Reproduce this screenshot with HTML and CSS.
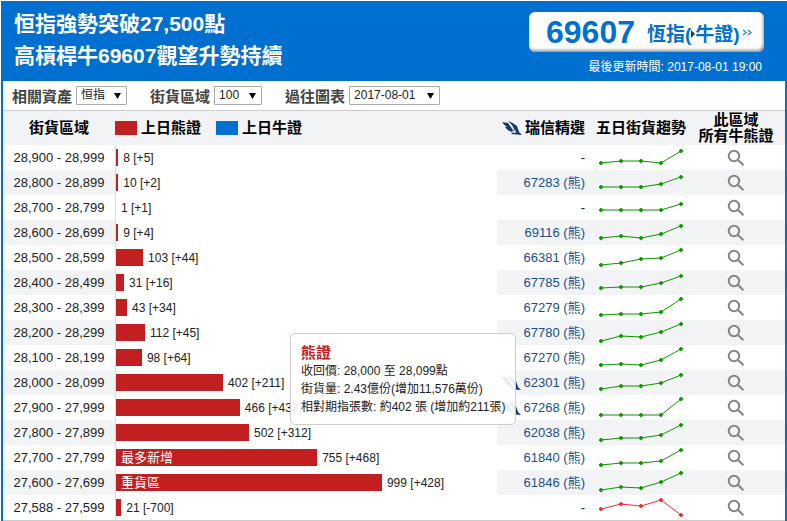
FILE: index.html
```
<!doctype html>
<html lang="zh-Hant">
<head>
<meta charset="utf-8">
<meta name="viewport" content="width=device-width,initial-scale=1">
<title>恒指牛熊證街貨分佈</title>
<link rel="stylesheet" href="styles.css">
</head>

<body>
<!-- 共用圖形 -->
<svg class="defs" width="0" height="0">
	<defs>
		<marker id="dotUp" viewBox="0 0 5 5" refX="2.5" refY="2.5" markerWidth="5" markerHeight="5" markerUnits="userSpaceOnUse"><path d="M2.5 0L5 2.5 2.5 5 0 2.5z" fill="#109600"/></marker>
		<marker id="dotDown" viewBox="0 0 5 5" refX="2.5" refY="2.5" markerWidth="5" markerHeight="5" markerUnits="userSpaceOnUse"><path d="M2.5 0L5 2.5 2.5 5 0 2.5z" fill="#ee2e33"/></marker>
	</defs>
	<symbol id="find" viewBox="0 0 18 18">
		<circle cx="7" cy="7" r="5.2" fill="none" stroke="#868686" stroke-width="2"/>
		<path d="M10.8 10.8L16.4 16.2" fill="none" stroke="#868686" stroke-width="2.2"/>
	</symbol>
	<symbol id="sail" viewBox="0 0 20 14">
		<path d="M0 1L6 2 11 9 10 11Q6 10 3 6L5 6Q2 4 0 1z" fill="#16386b"/>
		<path d="M6 0Q12 2 15 5L17 11 20 14 9 13Q12 11 12 8Q10 3 6 0z" fill="#16386b"/>
		<path d="M13 8L14 12 11 12z" fill="#dfe4ec"/>
	</symbol>
</svg>

<div id="cbbc">
	<div id="banner">
		<h1>恒指強勢突破27,500點<br>高槓桿牛69607觀望升勢持續</h1>
		<div class="pick">
			<a href="#" class="pick_btn">
				<strong>69607</strong>
				<span class="name">恆指(<svg class="tri" width="4" height="8" viewBox="0 0 4 8"><path d="M0 0L4 4 0 8z" fill="#123a6b"/></svg>牛證)</span>
				<svg width="11" height="7" viewBox="0 0 11 7"><path d="M1 1L4 3.5 1 6M6 1L9 3.5 6 6" fill="none" stroke="#3f8fdc" stroke-width="1.6"/></svg>
			</a>
			<p class="update">最後更新時間: 2017-08-01 19:00</p>
		</div>
	</div>

	<form id="filter">
		<label for="asset">相關資產</label>
		<select id="asset" class="s_asset"><option>恒指</option></select>
		<label for="range">街貨區域</label>
		<select id="range" class="s_range"><option>100</option></select>
		<label for="past">過往圖表</label>
		<select id="past" class="s_past"><option>2017-08-01</option></select>
	</form>

	<table id="street">
		<colgroup>
			<col class="c_range"><col><col class="c_pick"><col class="c_trend"><col class="c_find">
		</colgroup>
		<thead>
			<tr>
				<th>街貨區域</th>
				<th class="legend"><span class="key"><i class="bear"></i>上日熊證</span><span class="key"><i class="bull"></i>上日牛證</span></th>
				<th class="best"><span><svg width="20" height="14"><use href="#sail"/></svg>瑞信精選</span></th>
				<th>五日街貨趨勢</th>
				<th class="find">此區域<br>所有牛熊證</th>
			</tr>
		</thead>
		<tbody>
			<tr>
				<td>28,900 - 28,999</td>
				<td class="chart"><div class="line"><div class="bar" style="width:0.6%"></div><span>8 [+5]</span></div></td>
				<td class="best">-</td>
				<td class="trend"><svg class="up" width="90" height="25" viewBox="0 0 90 25"><polyline points="5,18 25,16 45,16 65,18 85,6"/></svg></td>
				<td class="find"><a href="#" aria-label="28,900 - 28,999"><svg width="18" height="18"><use href="#find"/></svg></a></td>
			</tr>
			<tr>
				<td>28,800 - 28,899</td>
				<td class="chart"><div class="line"><div class="bar" style="width:0.6%"></div><span>10 [+2]</span></div></td>
				<td class="best"><a href="#">67283 (熊)</a></td>
				<td class="trend"><svg class="up" width="90" height="25" viewBox="0 0 90 25"><polyline points="5,17 25,17 45,17 65,14 85,7"/></svg></td>
				<td class="find"><a href="#" aria-label="28,800 - 28,899"><svg width="18" height="18"><use href="#find"/></svg></a></td>
			</tr>
			<tr>
				<td>28,700 - 28,799</td>
				<td class="chart"><div class="line"><div class="bar" style="width:0%"></div><span>1 [+1]</span></div></td>
				<td class="best">-</td>
				<td class="trend"><svg class="up" width="90" height="25" viewBox="0 0 90 25"><polyline points="5,15 25,15 45,15 65,15 85,9"/></svg></td>
				<td class="find"><a href="#" aria-label="28,700 - 28,799"><svg width="18" height="18"><use href="#find"/></svg></a></td>
			</tr>
			<tr>
				<td>28,600 - 28,699</td>
				<td class="chart"><div class="line"><div class="bar" style="width:0.6%"></div><span>9 [+4]</span></div></td>
				<td class="best"><a href="#">69116 (熊)</a></td>
				<td class="trend"><svg class="up" width="90" height="25" viewBox="0 0 90 25"><polyline points="5,18 25,16 45,18 65,14 85,6"/></svg></td>
				<td class="find"><a href="#" aria-label="28,600 - 28,699"><svg width="18" height="18"><use href="#find"/></svg></a></td>
			</tr>
			<tr>
				<td>28,500 - 28,599</td>
				<td class="chart"><div class="line"><div class="bar" style="width:7.1%"></div><span>103 [+44]</span></div></td>
				<td class="best"><a href="#">66381 (熊)</a></td>
				<td class="trend"><svg class="up" width="90" height="25" viewBox="0 0 90 25"><polyline points="5,20 25,18 45,14 65,13 85,5"/></svg></td>
				<td class="find"><a href="#" aria-label="28,500 - 28,599"><svg width="18" height="18"><use href="#find"/></svg></a></td>
			</tr>
			<tr>
				<td>28,400 - 28,499</td>
				<td class="chart"><div class="line"><div class="bar" style="width:2.1%"></div><span>31 [+16]</span></div></td>
				<td class="best"><a href="#">67785 (熊)</a></td>
				<td class="trend"><svg class="up" width="90" height="25" viewBox="0 0 90 25"><polyline points="5,18 25,17 45,17 65,13 85,6"/></svg></td>
				<td class="find"><a href="#" aria-label="28,400 - 28,499"><svg width="18" height="18"><use href="#find"/></svg></a></td>
			</tr>
			<tr>
				<td>28,300 - 28,399</td>
				<td class="chart"><div class="line"><div class="bar" style="width:2.9%"></div><span>43 [+34]</span></div></td>
				<td class="best"><a href="#">67279 (熊)</a></td>
				<td class="trend"><svg class="up" width="90" height="25" viewBox="0 0 90 25"><polyline points="5,20 25,19 45,19 65,17 85,4"/></svg></td>
				<td class="find"><a href="#" aria-label="28,300 - 28,399"><svg width="18" height="18"><use href="#find"/></svg></a></td>
			</tr>
			<tr>
				<td>28,200 - 28,299</td>
				<td class="chart"><div class="line"><div class="bar" style="width:7.6%"></div><span>112 [+45]</span></div></td>
				<td class="best"><a href="#">67780 (熊)</a></td>
				<td class="trend"><svg class="up" width="90" height="25" viewBox="0 0 90 25"><polyline points="5,21 25,16 45,17 65,12 85,4"/></svg></td>
				<td class="find"><a href="#" aria-label="28,200 - 28,299"><svg width="18" height="18"><use href="#find"/></svg></a></td>
			</tr>
			<tr>
				<td>28,100 - 28,199</td>
				<td class="chart"><div class="line"><div class="bar" style="width:6.8%"></div><span>98 [+64]</span></div></td>
				<td class="best"><a href="#">67270 (熊)</a></td>
				<td class="trend"><svg class="up" width="90" height="25" viewBox="0 0 90 25"><polyline points="5,20 25,19 45,20 65,15 85,4"/></svg></td>
				<td class="find"><a href="#" aria-label="28,100 - 28,199"><svg width="18" height="18"><use href="#find"/></svg></a></td>
			</tr>
			<tr>
				<td>28,000 - 28,099</td>
				<td class="chart">
					<div class="line"><div class="bar" style="width:28.1%"></div><span>402 [+211]</span>
						<!-- 滑鼠移到橫條時的提示框 -->
						<div id="tip">
							<h2>熊證</h2>
							<p>收回價: 28,000 至 28,099點</p>
							<p>街貨量: 2.43億份(增加11,576萬份)</p>
							<p>相對期指張數: 約402 張 (增加約211張)</p>
						</div>
					</div>
				</td>
				<td class="best"><span><svg width="20" height="14"><use href="#sail"/></svg><a href="#">62301 (熊)</a></span></td>
				<td class="trend"><svg class="up" width="90" height="25" viewBox="0 0 90 25"><polyline points="5,19 25,16 45,16 65,13 85,5"/></svg></td>
				<td class="find"><a href="#" aria-label="28,000 - 28,099"><svg width="18" height="18"><use href="#find"/></svg></a></td>
			</tr>
			<tr>
				<td>27,900 - 27,999</td>
				<td class="chart"><div class="line"><div class="bar" style="width:32.5%"></div><span>466 [+433]</span></div></td>
				<td class="best"><span><svg width="20" height="14"><use href="#sail"/></svg><a href="#">67268 (熊)</a></span></td>
				<td class="trend"><svg class="up" width="90" height="25" viewBox="0 0 90 25"><polyline points="5,20 25,20 45,20 65,20 85,4"/></svg></td>
				<td class="find"><a href="#" aria-label="27,900 - 27,999"><svg width="18" height="18"><use href="#find"/></svg></a></td>
			</tr>
			<tr>
				<td>27,800 - 27,899</td>
				<td class="chart"><div class="line"><div class="bar" style="width:34.9%"></div><span>502 [+312]</span></div></td>
				<td class="best"><a href="#">62038 (熊)</a></td>
				<td class="trend"><svg class="up" width="90" height="25" viewBox="0 0 90 25"><polyline points="5,20 25,18 45,18 65,15 85,5"/></svg></td>
				<td class="find"><a href="#" aria-label="27,800 - 27,899"><svg width="18" height="18"><use href="#find"/></svg></a></td>
			</tr>
			<tr>
				<td>27,700 - 27,799</td>
				<td class="chart"><div class="line"><div class="bar" style="width:52.8%">最多新增</div><span>755 [+468]</span></div></td>
				<td class="best"><a href="#">61840 (熊)</a></td>
				<td class="trend"><svg class="up" width="90" height="25" viewBox="0 0 90 25"><polyline points="5,20 25,18 45,18 65,16 85,5"/></svg></td>
				<td class="find"><a href="#" aria-label="27,700 - 27,799"><svg width="18" height="18"><use href="#find"/></svg></a></td>
			</tr>
			<tr>
				<td>27,600 - 27,699</td>
				<td class="chart"><div class="line"><div class="bar" style="width:69.8%">重貨區</div><span>999 [+428]</span></div></td>
				<td class="best"><a href="#">61846 (熊)</a></td>
				<td class="trend"><svg class="up" width="90" height="25" viewBox="0 0 90 25"><polyline points="5,20 25,17 45,18 65,12 85,3"/></svg></td>
				<td class="find"><a href="#" aria-label="27,600 - 27,699"><svg width="18" height="18"><use href="#find"/></svg></a></td>
			</tr>
			<tr>
				<td>27,588 - 27,599</td>
				<td class="chart"><div class="line"><div class="bar" style="width:1.4%"></div><span>21 [-700]</span></div></td>
				<td class="best">-</td>
				<td class="trend"><svg class="down" width="90" height="25" viewBox="0 0 90 25"><polyline points="5,14 25,9 45,11 65,5 85,20"/></svg></td>
				<td class="find"><a href="#" aria-label="27,588 - 27,599"><svg width="18" height="18"><use href="#find"/></svg></a></td>
			</tr>
		</tbody>
	</table>
</div>
</body>
</html>
```
FILE: styles.css
```
body,div,h1,h2,p,form,table,th,td{margin:0; padding:0;}
body{
	font-family:"Liberation Sans", Arial, "Noto Sans CJK TC", sans-serif;
	font-size:13px;
	color:#222;
	background:#fff;
}
a{text-decoration:none;}
.defs{position:absolute;}
#cbbc{
	margin:1px 0 0 1px;
	border:solid #0070d0;
	border-width:0 2px;
}

/*頂部標題*/
#banner{
	display:flex;
	justify-content:space-between;
	height:80px;
	padding:0 21px 0 11px;
	background:#0070d0;
	color:#fff;
}
#banner h1{
	padding-top:7px;
	font-size:21px;
	line-height:32px;
	white-space:nowrap;
}
.pick{padding-top:11px; text-align:right;}
.pick_btn{
	display:flex;
	align-items:center;
	width:235px;
	height:40px;
	padding:0 8px 0 17px;
	box-sizing:border-box;
	border-radius:6px;
	background:#fff;
	box-shadow:inset -1px -2px 3px #999;
	color:#0070d0;
	white-space:nowrap;
}
.pick_btn strong{font-size:32px; line-height:40px;}
.pick_btn .name{margin:0 2px 0 12px; font-size:19px; font-weight:bold;}
.tri{vertical-align:3px;}
.update{padding:6px 2px 0 0; font-size:12px; line-height:18px;}

/*篩選*/
#filter{
	display:flex;
	align-items:center;
	height:29px;
	padding-left:9px;
	border-bottom:1px solid #ccc;
}
#filter label{
	margin-right:4px;
	font-size:15px;
	font-weight:bold;
	color:#444;
}
#filter select{
	height:19px;
	margin:0 23px 0 0;
	padding:0 0 0 4px;
	border:1px solid #aaa;
	border-radius:1px;
	appearance:none;
	background:#fff url("data:image/svg+xml,%3Csvg xmlns='http://www.w3.org/2000/svg' width='7' height='6'%3E%3Cpath d='M0 0h7L3.5 6z'/%3E%3C/svg%3E") no-repeat right 5px center;
	font-family:inherit;
	font-size:12px;
	line-height:17px;
	color:#222;
}
#filter .s_asset{width:51px;}
#filter .s_range{width:48px;}
#filter .s_past{width:91px;}

/*街貨表*/
#street{
	width:100%;
	table-layout:fixed;
	border-collapse:collapse;
	border-bottom:1px solid #ccc;
}
.c_range{width:112px;}
.c_pick{width:94px;}
.c_trend{width:100px;}
.c_find{width:94px;}
#street th{
	height:34px;
	background:#f2f3f5;
	font-size:15px;
	line-height:16px;
	color:#000;
	white-space:nowrap;
}
#street td{
	height:25px;
	line-height:25px;
	text-align:center;
	white-space:nowrap;
}
#street tbody tr:nth-child(even){background:#f2f3f5;}
#street .legend{text-align:left;}
.key{margin-right:15px;}
.key i{
	display:inline-block;
	width:22px;
	height:14px;
	margin-right:4px;
	vertical-align:-2px;
}
.bear{background:#c22020;}
.bull{background:#0070d0;}
#street .best{padding-right:6px; text-align:right;}
#street .find{padding-right:4px;}
.best span{display:flex; align-items:center; justify-content:flex-end; gap:3px;}
.best a{color:#1b4f8a;}

#street .chart{background:#fff;}
.line{
	position:relative;
	display:flex;
	align-items:center;
	height:25px;
	border-left:1px solid #ddd;
	font-size:12px;
}
.line span{padding-top:1px;}
.bar{
	flex:none;
	height:17px;
	margin-right:5px;
	background:#c22020;
	font-size:13px;
	line-height:17px;
	text-align:left;
	text-indent:5px;
	color:#fff;
}
.trend svg,.find svg{display:block; margin:0 auto;}
.trend polyline{fill:none; stroke-width:1;}
.up polyline{stroke:#109600; marker:url(#dotUp);}
.down polyline{stroke:#ee2e33; marker:url(#dotDown);}

#tip{
	position:absolute;
	z-index:1;
	left:174px;
	top:-37px;
	padding:10px 10px 8px;
	border:1px solid #ccc;
	border-radius:5px;
	background:rgba(255,255,255,.9);
	font-size:12px;
	line-height:18px;
	text-align:left;
	color:#222;
}
#tip h2{font-size:15px; line-height:18px; color:#c22020;}
```
